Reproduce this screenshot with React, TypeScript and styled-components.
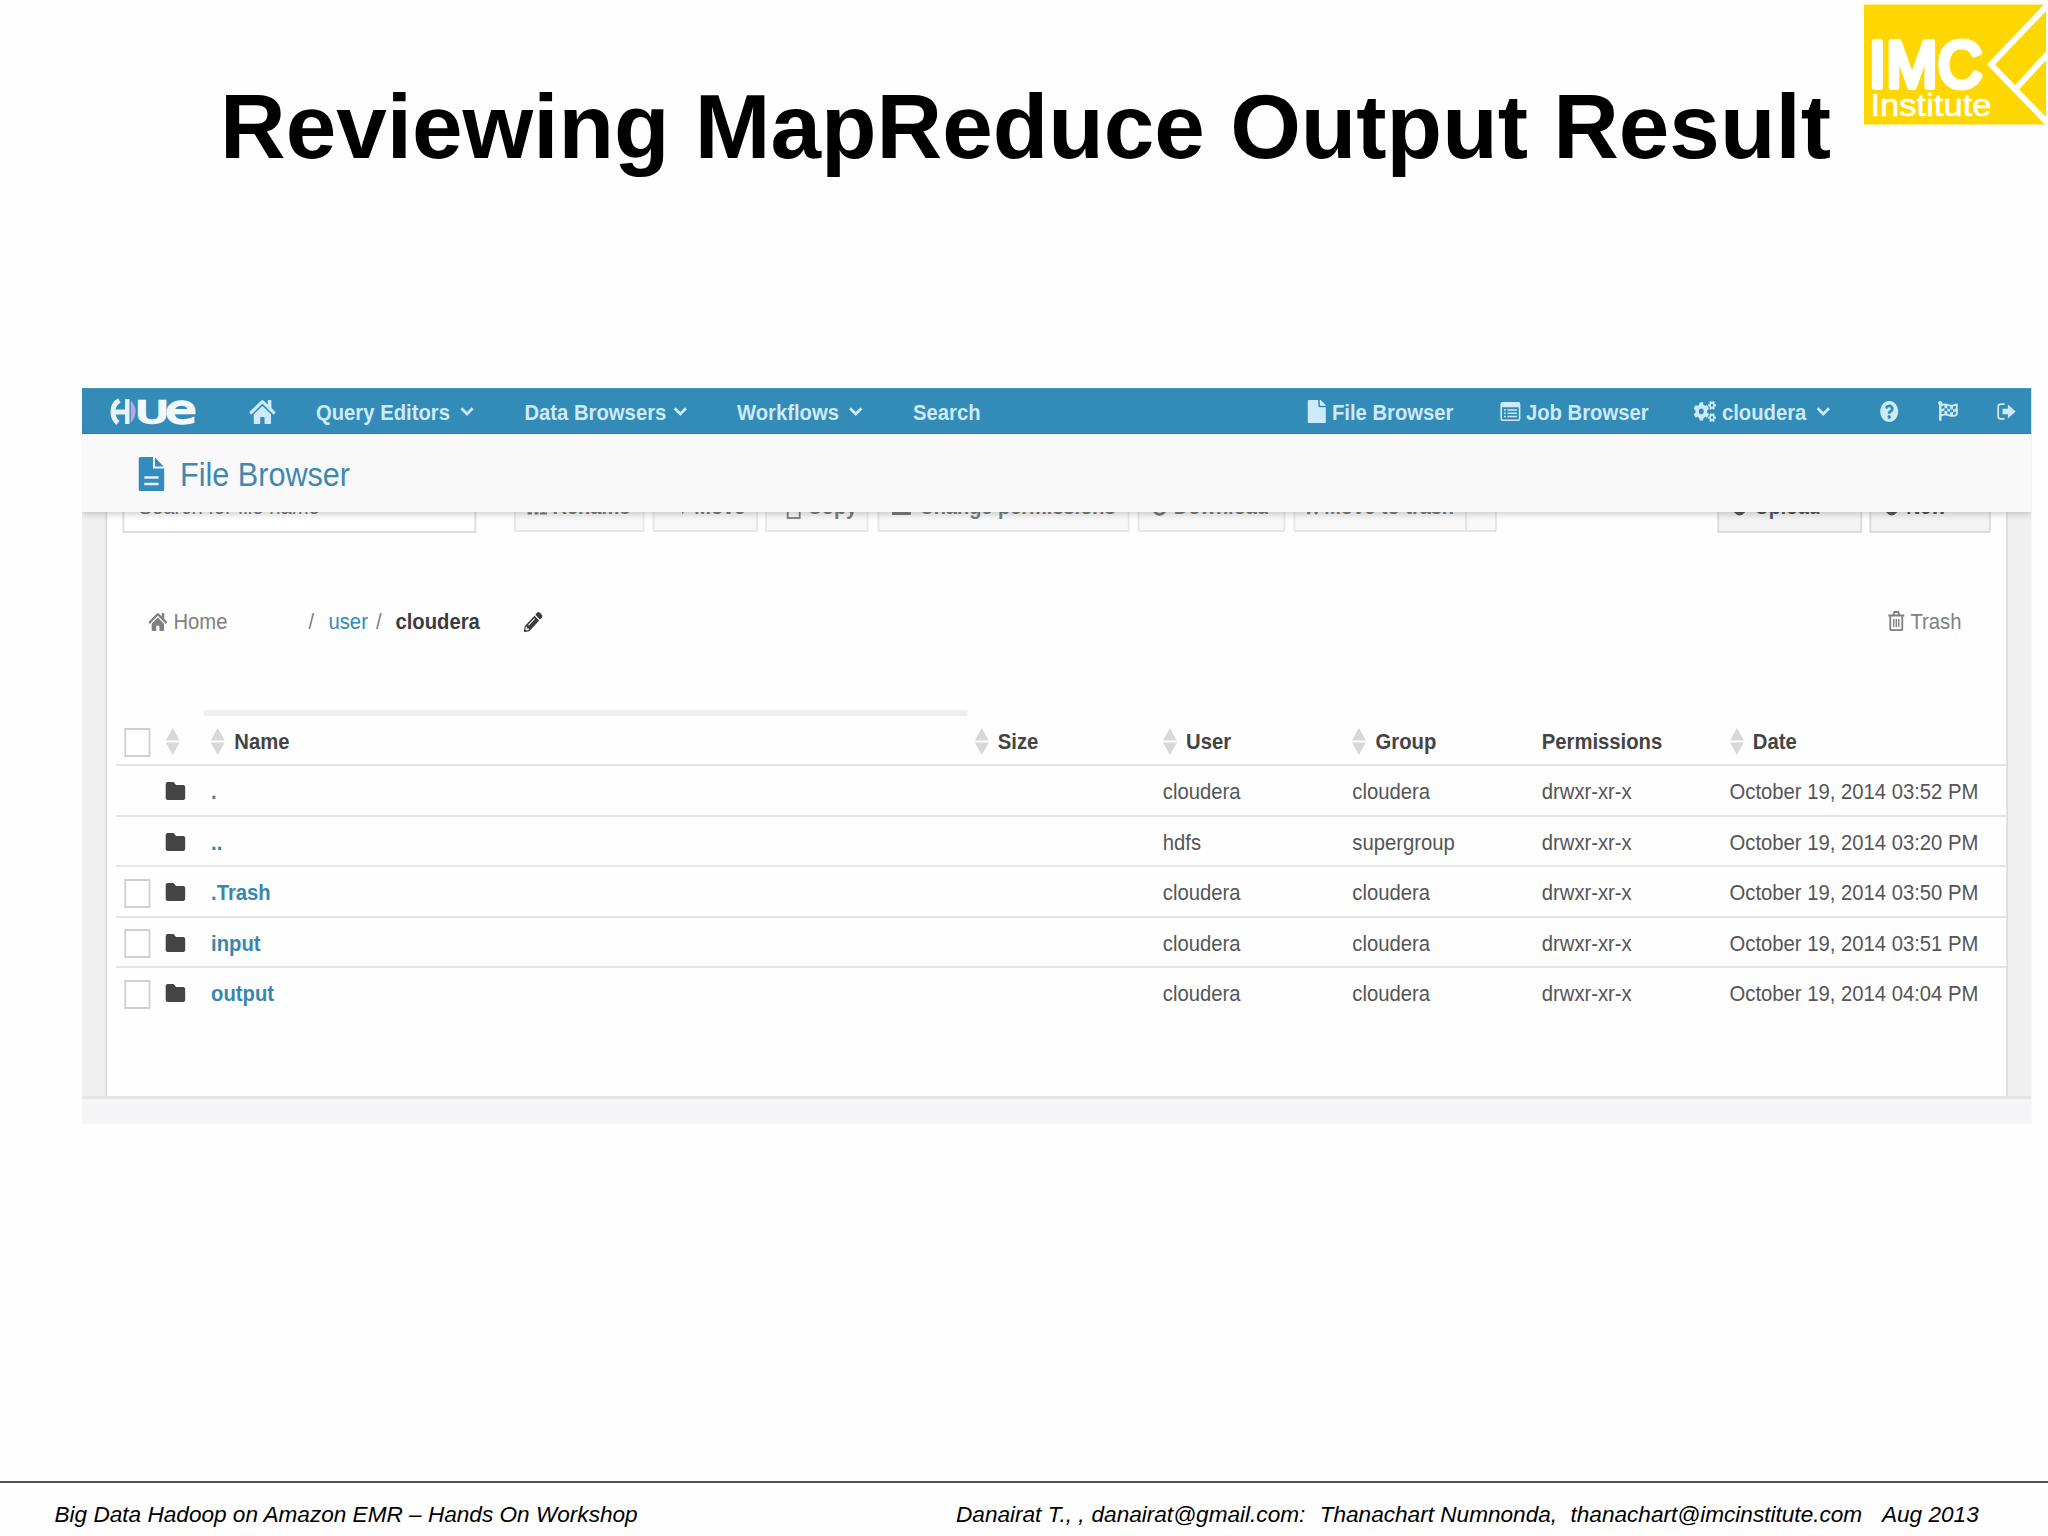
import React from "react";
import styled, { createGlobalStyle } from "styled-components";
import {
  FaCogs,
  FaFile,
  FaFlagCheckered,
  FaFolder,
  FaHome,
  FaPencilAlt,
  FaQuestionCircle,
} from "react-icons/fa";

/* The embedded application is squeezed horizontally by this factor. */
const SQUEEZE = 0.9;
const sx = (n: number) => `${(n / SQUEEZE).toFixed(2)}px`;
const tracks = (stops: number[]) =>
  stops.slice(1).map((s, i) => sx(s - stops[i])).join(" ");

const SANS = `"Liberation Sans", Arial, sans-serif`;

const GlobalStyle = createGlobalStyle`
  * { box-sizing: border-box; }
  body { margin: 0; background: #fff; font-family: ${SANS}; }
`;

const Slide = styled.div`
  width: 2048px;
  height: 1536px;
  display: flex;
  flex-direction: column;
  overflow: hidden;
  background: #fefefe;
`;

const SlideHeader = styled.header`
  height: 388px;
  flex: none;
  display: flex;
  align-items: flex-start;
  padding: 4px 2px 0 220px;
`;

const SlideTitle = styled.h1`
  margin: 73px 0 0;
  font-size: 90.9px;
  line-height: 100px;
  font-weight: 700;
  color: #000;
  white-space: nowrap;
`;

const Logo = styled.svg`
  display: block;
  margin-left: auto;
  width: 182px;
  height: 121px;
`;

const Frame = styled.div`
  width: 1949px;
  height: 736px;
  flex: none;
  margin-left: 82px;
`;

const Shot = styled.div`
  width: ${sx(1949)};
  height: 736px;
  transform: scaleX(${SQUEEZE});
  transform-origin: 0 0;
  display: flex;
  flex-direction: column;
  overflow: hidden;
  background: #f0f0f0;
  font-size: 22.5px;
  line-height: 26px;
  color: #4a4a4a;
`;

const Nav = styled.nav`
  height: 46px;
  flex: none;
  display: grid;
  grid-template-columns: ${tracks([82, 109, 249, 316, 524.5, 737, 913, 1308, 1500, 1694, 1880.5, 1938, 1997.5, 2031])};
  align-items: center;
  background: #338bb8;
  border-top: 1px solid #3f93be;
  border-bottom: 1px solid #2d7ea9;
  color: #cdeafa;
  font-weight: 700;
  position: relative;
  z-index: 2;
`;

const NavItem = styled.div<{ $gap?: number }>`
  display: flex;
  align-items: center;
  gap: ${(p) => sx(p.$gap ?? 6)};
  white-space: nowrap;
  padding-top: 3px;
`;

const NavLabel = styled.span<{ $w?: number }>`
  width: ${(p) => (p.$w ? sx(p.$w) : "auto")};
`;

const Icon = styled.span<{ $w: number; $h: number; $dy?: number }>`
  display: block;
  flex: none;
  width: ${(p) => sx(p.$w)};
  height: ${(p) => p.$h}px;
  margin-top: ${(p) => p.$dy ?? 0}px;
  svg {
    display: block;
    width: 100%;
    height: 100%;
    overflow: visible;
  }
`;

const AppHeader = styled.div`
  height: 78px;
  flex: none;
  display: flex;
  align-items: center;
  gap: ${sx(15.5)};
  padding: 2px 0 0 ${sx(57)};
  background: #f9f9f9;
  box-shadow: 0 2px 7px rgba(0, 0, 0, 0.2);
  position: relative;
  z-index: 1;
`;

const AppTitle = styled.h2`
  margin: 0;
  font-size: 34px;
  line-height: 40px;
  font-weight: 400;
  color: #3f88b0;
`;

const AppIcon = styled(Icon)`
  color: #338bc0;
`;

const Body = styled.div`
  height: 587px;
  flex: none;
  display: flex;
  padding: 0 ${sx(23)} 0 ${sx(23.5)};
  border-bottom: 3px solid #e5e5e8;
`;

const Panel = styled.main`
  flex: 1;
  background: #fefefe;
  border-left: 2px solid #dadada;
  border-right: 2px solid #dddde0;
  overflow: hidden;
`;

const AppFooter = styled.div`
  flex: 1;
  background: #f5f5f7;
`;

const Toolbar = styled.div`
  height: 50px;
  margin-top: -29px;
  display: grid;
  grid-template-columns: ${tracks([107.3, 122.3, 513.8, 652.5, 765.5, 877.5, 1138, 1293.5, 1717.5, 1869, 1992])};
  align-items: start;
`;

const SearchBox = styled.div`
  width: ${sx(354)};
  height: 50px;
  padding: 9px 0 0 ${sx(14.5)};
  border: 2px solid #dcdcdc;
  background: #fff;
  color: #777;
`;

const Button = styled.div<{ $w: number; $solid?: boolean; $gap?: number; $pad?: number }>`
  width: ${(p) => sx(p.$w)};
  height: ${(p) => (p.$solid ? 50 : 48.5)}px;
  display: flex;
  align-items: center;
  gap: ${(p) => sx(p.$gap ?? 6)};
  padding: 0 0 ${(p) => (p.$solid ? 3 : 1)}px ${(p) => sx(p.$pad ?? 12)};
  border: 2px solid ${(p) => (p.$solid ? "#dadada" : "#e6e6e6")};
  border-radius: 2px;
  background: ${(p) => (p.$solid ? "#f3f3f3" : "#f8f8f8")};
  color: ${(p) => (p.$solid ? "#555" : "#7c7c7c")};
  font-size: ${(p) => (p.$solid ? 21.6 : 22.2)}px;
  font-weight: 700;
  white-space: nowrap;
`;

const SplitButton = styled.div`
  display: flex;
`;

const Caret = styled.div`
  width: ${sx(32)};
  height: 48.5px;
  margin-left: -2px;
  border: 2px solid #e4e4e4;
  border-radius: 2px;
  background: #f9f9f9;
`;

const Breadcrumb = styled.div`
  height: 26px;
  margin-top: 76px;
  display: grid;
  grid-template-columns: ${tracks([107.3, 149, 308.5, 328.5, 376, 395.5, 524, 1888.5, 2006])};
  align-items: center;
  color: #808080;
`;

const Crumb = styled.div<{ $tone?: "link" | "strong" }>`
  display: flex;
  align-items: center;
  gap: ${sx(6)};
  color: ${(p) => (p.$tone === "link" ? "#338bb8" : p.$tone === "strong" ? "#3c3c3c" : "inherit")};
  font-weight: ${(p) => (p.$tone === "strong" ? 700 : 400)};
`;

const ScrollTrack = styled.div`
  width: ${sx(764)};
  height: 6px;
  margin: 75px 0 0 ${sx(96.5)};
  background: #eeeeee;
`;

const Table = styled.div`
  margin-left: ${sx(8.8)};
`;

const Row = styled.div<{ $head?: boolean; $last?: boolean }>`
  height: ${(p) => (p.$head ? 50 : 50.5)}px;
  display: grid;
  grid-template-columns: ${tracks([116, 165.5, 211, 974.5, 1162.7, 1352.2, 1541.7, 1729.5, 2006])};
  align-items: center;
  padding-top: 4px;
  border-bottom: 2px solid ${(p) => (p.$last ? "transparent" : "#e4e4e6")};
  color: ${(p) => (p.$head ? "#444" : "#555")};
  font-weight: ${(p) => (p.$head ? 700 : 400)};
  white-space: nowrap;
`;

const Cell = styled.div`
  display: flex;
  align-items: center;
  gap: ${sx(9.3)};
`;

const NameLink = styled(Cell)`
  color: #3786ae;
  font-weight: 700;
`;

const Checkbox = styled.span`
  width: ${sx(26)};
  height: 29px;
  margin-left: ${sx(8)};
  border: 2px solid #d0d0d0;
  background: #fff;
`;

const SlideFooter = styled.footer`
  margin-top: auto;
  height: 55px;
  display: grid;
  grid-template-columns: ${[901.5, 135.5, 228.2, 250.8, 311.5, 165.5].map((n) => n + "px").join(" ")};
  align-content: start;
  padding: 18px 0 0 54.5px;
  border-top: 2px solid #505356;
  font-size: 22.6px;
  line-height: 28px;
  font-style: italic;
  color: #000;
  white-space: nowrap;
`;

const fit = { preserveAspectRatio: "none" } as const;

const Chevron = () => (
  <Icon $w={14} $h={9} $dy={-3}>
    <svg viewBox="0 0 14 9" {...fit}>
      <path d="M1.300 1.200L7 7L12.700 1.200" fill="none" stroke="currentColor" strokeWidth="2.700" />
    </svg>
  </Icon>
);

const Sorter = () => (
  <Icon $w={14} $h={27} $dy={-1}>
    <svg viewBox="0 0 14 27" {...fit}>
      <path d="M7 0L14 12.4H0zM0 14.6H14L7 27z" fill="#d8d8d8" />
    </svg>
  </Icon>
);

const ImcLogo = () => (
  <Logo viewBox="0 0 182 121">
    <rect width="182" height="120" y="0.5" fill="#ffd700" />
    <g fill="#fff" stroke="#fff" strokeLinejoin="round" fontFamily="Liberation Sans, sans-serif">
      <text transform="translate(5 83) scale(1 1.06)" fontSize="61" strokeWidth="5.500" textLength="113" lengthAdjust="spacing">IMC</text>
      <text x="6.5" y="111.500" fontSize="31" strokeWidth="0.600" textLength="121" lengthAdjust="spacingAndGlyphs">Institute</text>
    </g>
    <path d="M184 0.5L127 60.500L184 119.500M152.500 84L184 49.500" fill="none" stroke="#fff" strokeWidth="6" />
  </Logo>
);

const HueLogo = () => (
  <Icon $w={87} $h={27} $dy={1}>
    <svg viewBox="0 0 88 27" {...fit} fontFamily="DejaVu Sans, sans-serif" fontWeight="400">
      <path d="M22 2.500Q32 13 22 25z" fill="#b9a6e2" />
      <path d="M10.500 2.500Q4 6 4 13.500Q4 21 9 25M4 14H18" fill="none" stroke="#e4f1fa" strokeWidth="5" />
      <path d="M18.500 1V26" fill="none" stroke="#e4f1fa" strokeWidth="4.500" />
      <g fill="#f3f8fc" stroke="#f3f8fc" strokeWidth="2.400">
        <text x="27" y="24.500" fontSize="30.500" textLength="33" lengthAdjust="spacingAndGlyphs">U</text>
        <text x="57" y="24.500" fontSize="38.500" textLength="31.500" lengthAdjust="spacingAndGlyphs">e</text>
      </g>
    </svg>
  </Icon>
);

const DocumentIcon = () => (
  <svg viewBox="0 0 25 34" {...fit}>
    <path d="M1.500 0H14V11.500H25V32.500Q25 34 23.500 34H1.500Q0 34 0 32.500V1.500Q0 0 1.500 0zM16 0.500L24.500 9.500H16z" fill="currentColor" />
    <path d="M5.500 20.500H19.500M5.500 27H19.500" stroke="#e6f4fb" strokeWidth="2.400" />
  </svg>
);

const SignOutIcon = () => (
  <svg viewBox="0 0 19 18" {...fit}>
    <path d="M7.500 1.200H3.500Q1 1.200 1 4V14Q1 16.800 3.500 16.800H7.500" fill="none" stroke="currentColor" strokeWidth="1.800" />
    <path d="M5.500 6H11V1.500L19 9L11 16.500V12H5.500z" fill="currentColor" />
  </svg>
);

const JobIcon = () => (
  <svg viewBox="0 0 20 19" {...fit} fill="none" stroke="currentColor">
    <rect x="0.800" y="0.800" width="18.400" height="17.400" rx="1.500" strokeWidth="1.600" />
    <path d="M1 3H19" strokeWidth="4.500" />
    <path d="M3.500 8H5.500M7 8H16.500M3.500 11.300H5.500M7 11.300H16.500M3.500 14.600H5.500M7 14.600H16.500" strokeWidth="1.500" />
  </svg>
);

const TrashIcon = () => (
  <svg viewBox="0 0 16 20" {...fit} fill="none" stroke="currentColor" strokeWidth="1.800">
    <path d="M0 4.500H16M5 4L6 1H10L11 4M2 5V17.500Q2 19.200 3.500 19.200H12.500Q14 19.200 14 17.500V5" />
    <path d="M5.500 8V16M8 8V16M10.500 8V16" strokeWidth="1.400" />
  </svg>
);

const headers = ["Size", "User", "Group", "Permissions", "Date"];

const files = [
  { name: ".", user: "cloudera", group: "cloudera", time: "03:52", check: false },
  { name: "..", user: "hdfs", group: "supergroup", time: "03:20", check: false },
  { name: ".Trash", user: "cloudera", group: "cloudera", time: "03:50", check: true },
  { name: "input", user: "cloudera", group: "cloudera", time: "03:51", check: true },
  { name: "output", user: "cloudera", group: "cloudera", time: "04:04", check: true },
];

const TopNav = () => (
  <Nav>
    <span />
    <HueLogo />
    <Icon $w={26} $h={24} $dy={2}><FaHome {...fit} viewBox="0 30 576 452" /></Icon>
    <NavItem $gap={0}><NavLabel $w={144}>Query Editors</NavLabel><Chevron /></NavItem>
    <NavItem $gap={0}><NavLabel $w={148.5}>Data Browsers</NavLabel><Chevron /></NavItem>
    <NavItem $gap={0}><NavLabel $w={111.5}>Workflows</NavLabel><Chevron /></NavItem>
    <NavItem>Search</NavItem>
    <NavItem><Icon $w={18} $h={23} $dy={-2}><FaFile {...fit} /></Icon>File Browser</NavItem>
    <NavItem><Icon $w={20} $h={19} $dy={-3}><JobIcon /></Icon>Job Browser</NavItem>
    <NavItem $gap={0}>
      <Icon $w={22} $h={21} $dy={-2}><FaCogs {...fit} /></Icon>
      <NavLabel $w={6} />
      <NavLabel $w={94}>cloudera</NavLabel>
      <Chevron />
    </NavItem>
    <Icon $w={18} $h={21} $dy={1}><FaQuestionCircle {...fit} viewBox="8 8 496 496" /></Icon>
    <Icon $w={20} $h={20}><FaFlagCheckered {...fit} /></Icon>
    <Icon $w={18.5} $h={17} $dy={1}><SignOutIcon /></Icon>
  </Nav>
);

const Actions = () => (
  <Toolbar>
    <span />
    <SearchBox>Search for file name</SearchBox>
    <Button $w={130.500} $gap={5}>
      <Icon $w={20} $h={17}>
        <svg viewBox="0 0 20 17" {...fit} fill="none" stroke="currentColor" strokeWidth="2">
          <path d="M0 15.500H4.500M2 15L5.500 2L9 15M7 15.500H11M12.500 15.500H19.500M16 2V15" />
        </svg>
      </Icon>
      Rename
    </Button>
    <Button $w={105} $pad={20} $gap={6}>
      <Icon $w={14} $h={18}>
        <svg viewBox="0 0 14 18" {...fit}><path d="M6 0L13 8L8 17V11H0V5H6z" fill="currentColor" /></svg>
      </Icon>
      Move
    </Button>
    <Button $w={103.500} $pad={19} $gap={7}>
      <Icon $w={14} $h={20} $dy={4}>
        <svg viewBox="0 0 14 20" {...fit}><rect x="1" y="1" width="12" height="18" fill="none" stroke="currentColor" strokeWidth="1.800" /></svg>
      </Icon>
      Copy
    </Button>
    <Button $w={252} $pad={13} $gap={8}>
      <Icon $w={19} $h={17}>
        <svg viewBox="0 0 19 17" {...fit}><path d="M0 10H19V17H0zM3 0H16V8H3z" fill="currentColor" /></svg>
      </Icon>
      Change permissions
    </Button>
    <Button $w={147} $gap={7}>
      <Icon $w={15} $h={18}>
        <svg viewBox="0 0 15 18" {...fit}><ellipse cx="7.500" cy="9" rx="6" ry="7.500" fill="none" stroke="currentColor" strokeWidth="3" /></svg>
      </Icon>
      Download
    </Button>
    <SplitButton>
      <Button $w={173.500} $gap={6}>
        <Icon $w={11} $h={17}>
          <svg viewBox="0 0 11 17" {...fit}><path d="M1 1L10 16M10 1L1 16" stroke="currentColor" strokeWidth="3" /></svg>
        </Icon>
        Move to trash
      </Button>
      <Caret />
    </SplitButton>
    <Button $solid $w={144.500} $gap={8} $pad={13.500}>
      <Icon $w={14} $h={19}>
        <svg viewBox="0 0 14 19" {...fit}><ellipse cx="7" cy="9.500" rx="7" ry="9" fill="currentColor" /></svg>
      </Icon>
      Upload
    </Button>
    <Button $solid $w={122} $gap={8} $pad={13.500}>
      <Icon $w={14} $h={19}>
        <svg viewBox="0 0 14 19" {...fit}><ellipse cx="7" cy="9.500" rx="7" ry="9" fill="currentColor" /></svg>
      </Icon>
      New
    </Button>
  </Toolbar>
);

const Path = () => (
  <Breadcrumb>
    <span />
    <Crumb><Icon $w={18.500} $h={18} $dy={-1}><FaHome {...fit} viewBox="0 30 576 452" /></Icon>Home</Crumb>
    <Crumb>/</Crumb>
    <Crumb $tone="link">user</Crumb>
    <Crumb>/</Crumb>
    <Crumb $tone="strong">cloudera</Crumb>
    <Crumb $tone="strong"><Icon $w={18.500} $h={20}><FaPencilAlt {...fit} /></Icon></Crumb>
    <Crumb><Icon $w={16} $h={20} $dy={-2}><TrashIcon /></Icon>Trash</Crumb>
  </Breadcrumb>
);

const FileTable = () => (
  <Table>
    <Row $head>
      <Cell><Checkbox /></Cell>
      <Cell><Sorter /></Cell>
      <Cell><Sorter />Name</Cell>
      {headers.map((h) => (
        <Cell key={h}>{h !== "Permissions" && <Sorter />}{h}</Cell>
      ))}
    </Row>
    {files.map((f, i) => (
      <Row key={f.name} $last={i === files.length - 1}>
        <Cell>{f.check && <Checkbox />}</Cell>
        <Cell>
          <Icon $w={19.500} $h={18} $dy={-2}><FaFolder {...fit} viewBox="0 64 512 384" color="#444" /></Icon>
        </Cell>
        <NameLink>{f.name}</NameLink>
        <Cell />
        <Cell>{f.user}</Cell>
        <Cell>{f.group}</Cell>
        <Cell>drwxr-xr-x</Cell>
        <Cell>October 19, 2014 {f.time} PM</Cell>
      </Row>
    ))}
  </Table>
);

export default function App() {
  return (
    <Slide>
      <GlobalStyle />
      <SlideHeader>
        <SlideTitle>Reviewing MapReduce Output Result</SlideTitle>
        <ImcLogo />
      </SlideHeader>
      <Frame>
        <Shot>
          <TopNav />
          <AppHeader>
            <AppIcon $w={25.500} $h={34}><DocumentIcon /></AppIcon>
            <AppTitle>File Browser</AppTitle>
          </AppHeader>
          <Body>
            <Panel>
              <Actions />
              <Path />
              <ScrollTrack />
              <FileTable />
            </Panel>
          </Body>
          <AppFooter />
        </Shot>
      </Frame>
      <SlideFooter>
        <span>Big Data Hadoop on Amazon EMR – Hands On Workshop</span>
        <span>Danairat T., ,</span>
        <span>danairat@gmail.com:</span>
        <span>Thanachart Numnonda,</span>
        <span>thanachart@imcinstitute.com</span>
        <span>Aug 2013</span>
      </SlideFooter>
    </Slide>
  );
}
